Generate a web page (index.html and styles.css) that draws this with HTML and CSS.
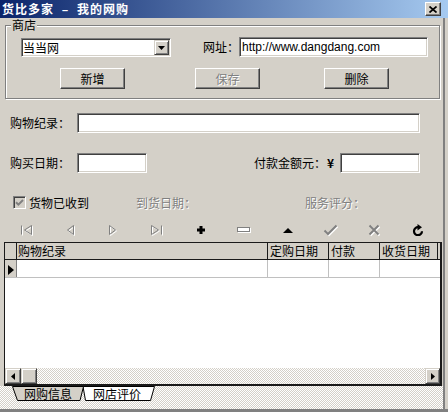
FILE: index.html
```html
<!DOCTYPE html>
<html lang="zh-CN">
<head>
<meta charset="utf-8">
<title>货比多家 – 我的网购</title>
<link rel="stylesheet" href="styles.css">
</head>
<body>
<div class="window">
  <div class="titlebar">
    <span class="title">货比多家 <span class="dash">–</span> 我的网购</span>
    <span class="close"><svg width="8" height="7" viewBox="0 0 8 7"><path d="M0.5 0.5 L7.5 6.5 M7.5 0.5 L0.5 6.5" stroke="#000" stroke-width="1.7"/></svg></span>
  </div>
  <div class="client">
    <div class="group">
      <span class="legend">商店</span>
      <div class="row1">
        <div class="combo">
          <span class="combo-text">当当网</span>
          <span class="combo-btn"><svg width="7" height="4" viewBox="0 0 7 4"><polygon points="0,0 7,0 3.5,4" fill="#000"/></svg></span>
        </div>
        <span class="url-label">网址：</span>
        <div class="input url">http://www.dangdang.com</div>
      </div>
      <div class="row2">
        <span class="btn b-add">新增</span>
        <span class="btn b-save disabled">保存</span>
        <span class="btn b-del">删除</span>
      </div>
    </div>

    <div class="frow r-record">
      <span class="lbl">购物纪录：</span>
      <div class="input w-record"></div>
    </div>

    <div class="frow r-date">
      <span class="lbl">购买日期：</span>
      <div class="input w-date"></div>
      <span class="lbl-amt">付款金额元：<b class="yen">¥</b></span>
      <div class="input w-amt"></div>
    </div>

    <div class="frow r-check">
      <span class="chk"><svg width="9" height="9" viewBox="0 0 9 9"><path d="M1 4.2 L3.4 6.6 L8 2" fill="none" stroke="#808080" stroke-width="2"/></svg></span>
      <span class="chk-label">货物已收到</span>
      <span class="dis arr-date">到货日期：</span>
      <span class="dis rating">服务评分：</span>
    </div>

    <div class="nav">
      <span class="nb"><svg width="14" height="13" viewBox="0 0 14 13">
        <path class="hl" transform="translate(1 1)" d="M1.5 1.5v9M11.5 1.5L4.5 6L11.5 10.5Z"/>
        <path class="dk" d="M1.5 1.5v9M11.5 1.5L4.5 6L11.5 10.5Z"/></svg></span>
      <span class="nb"><svg width="11" height="13" viewBox="0 0 11 13">
        <path class="hl" transform="translate(1 1)" d="M8.5 1.5L2.5 6L8.5 10.5Z"/>
        <path class="dk" d="M8.5 1.5L2.5 6L8.5 10.5Z"/></svg></span>
      <span class="nb"><svg width="11" height="13" viewBox="0 0 11 13">
        <path class="hl" transform="translate(1 1)" d="M1.5 1.5L7.5 6L1.5 10.5Z"/>
        <path class="dk" d="M1.5 1.5L7.5 6L1.5 10.5Z"/></svg></span>
      <span class="nb"><svg width="14" height="13" viewBox="0 0 14 13">
        <path class="hl" transform="translate(1 1)" d="M11.5 1.5v9M1.5 1.5L8.5 6L1.5 10.5Z"/>
        <path class="dk" d="M11.5 1.5v9M1.5 1.5L8.5 6L1.5 10.5Z"/></svg></span>
      <span class="nb"><svg width="8" height="8" viewBox="0 0 8 8"><path d="M2.5 0h3v2.5h2.5v3h-2.5v2.5h-3v-2.5h-2.5v-3h2.5z" fill="#000"/></svg></span>
      <span class="nb"><svg width="14" height="6" viewBox="0 0 14 6">
        <rect class="hl" x="1.5" y="1.5" width="12" height="4"/>
        <rect class="dk wf" x="0.5" y="0.5" width="12" height="4"/></svg></span>
      <span class="nb"><svg width="10" height="5" viewBox="0 0 10 5"><polygon points="0,5 5,0 10,5" fill="#000"/></svg></span>
      <span class="nb"><svg width="16" height="13" viewBox="0 0 16 13">
        <path class="hl th" transform="translate(1 1)" d="M1.5 6.5L5 10L13.5 1.5"/>
        <path class="dk th" d="M1.5 6.5L5 10L13.5 1.5"/></svg></span>
      <span class="nb"><svg width="13" height="13" viewBox="0 0 13 13">
        <path class="hl th" transform="translate(1 1)" d="M1.5 1.5L10.5 10.5M10.5 1.5L1.5 10.5"/>
        <path class="dk th" d="M1.5 1.5L10.5 10.5M10.5 1.5L1.5 10.5"/></svg></span>
      <span class="nb"><svg width="12" height="12" viewBox="0 0 12 12">
        <path d="M10 7.2 A4 4 0 1 1 6.2 3.2" fill="none" stroke="#000" stroke-width="2.2"/>
        <polygon points="5.5,0 10,3.2 5.5,6.4" fill="#000"/></svg></span>
    </div>

    <div class="grid">
      <div class="ghead">
        <div class="hc ci"></div>
        <div class="hc c1">购物纪录</div>
        <div class="hc c2">定购日期</div>
        <div class="hc c3">付款</div>
        <div class="hc c4">收货日期</div>
        <div class="hc cr"></div>
      </div>
      <div class="grow">
        <div class="dc ci"><svg width="6" height="10" viewBox="0 0 6 10"><polygon points="0,0 6,5 0,10" fill="#000"/></svg></div>
        <div class="dc c1"></div>
        <div class="dc c2"></div>
        <div class="dc c3"></div>
        <div class="dc c4"></div>
      </div>
      <div class="gbody"></div>
      <div class="hscroll">
        <span class="sbtn"><svg width="4" height="7" viewBox="0 0 4 7"><polygon points="4,0 0,3.5 4,7" fill="#000"/></svg></span>
        <span class="sbtn thumb"></span>
        <span class="track"></span>
        <span class="sbtn last"><svg width="4" height="7" viewBox="0 0 4 7"><polygon points="0,0 4,3.5 0,7" fill="#000"/></svg></span>
      </div>
    </div>

    <div class="tabs">
      <svg class="tabshape" width="160" height="16" viewBox="0 0 160 16">
        <polygon points="83,0.5 154.5,0.5 150.5,14.5 85.5,14.5" fill="#fff" stroke="#000"/>
        <polygon points="12.5,0.5 83.5,0.5 80,14.5 17.5,14.5" fill="#d4d0c8" stroke="#000"/>
      </svg>
      <span class="tab t1">网购信息</span>
      <span class="tab t2">网店评价</span>
    </div>
  </div>
  <div class="bottomband"></div>
</div>
</body>
</html>
```

FILE: styles.css
```css
* { box-sizing: border-box; margin: 0; padding: 0; }
html, body { width: 448px; height: 412px; overflow: hidden; }
body {
  background: #d4d0c8;
  font: 12px/14px "Noto Sans CJK SC", "Noto Sans", sans-serif;
  color: #000;
}
.window { display: flex; flex-direction: column; width: 448px; height: 412px; }

/* title bar */
.titlebar {
  flex: none;
  height: 18px;
  display: flex;
  align-items: center;
  justify-content: space-between;
  padding: 0 7px 0 2px;
  background: linear-gradient(to right, #0a246a, #a6caf0);
}
.title { color: #fff; font-weight: bold; letter-spacing: 1px; line-height: 14px; white-space: pre; }
.dash { margin: 0 4px; }
.close {
  width: 16px; height: 14px;
  display: flex; align-items: center; justify-content: center;
  background: #d4d0c8;
  border: 1px solid; border-color: #fff #404040 #404040 #fff;
  box-shadow: inset -1px -1px #808080;
}

/* client */
.client {
  flex: none;
  width: 445px; height: 391px;
  border-right: 2px solid #808080;
  display: flex; flex-direction: column;
}
.bottomband { flex: none; height: 3px; background: #808080; }

/* common controls */
.input {
  background: #fff;
  border: 1px solid; border-color: #808080 #fff #fff #808080;
  box-shadow: inset 1px 1px #404040, inset -1px -1px #d4d0c8;
  height: 20px;
}
.btn {
  display: flex; align-items: center; justify-content: center;
  width: 65px; height: 21px;
  background: #d4d0c8;
  border: 1px solid; border-color: #fff #404040 #404040 #fff;
  box-shadow: inset -1px -1px #808080;
}
.disabled, .dis { color: #808080; text-shadow: 1px 1px 0 #fff; }

/* group box */
.group {
  position: relative;
  flex: none;
  margin: 7px 0 0 5px;
  width: 435px; height: 74px;
  border: 1px solid #808080;
  box-shadow: inset 1px 1px #fff, 1px 1px #fff;
  padding: 11px 0 0 15px;
}
.legend {
  position: absolute; left: 5px; top: -8px;
  padding: 0 1px; background: #d4d0c8; line-height: 14px;
}
.row1 { display: flex; align-items: flex-start; height: 20px; }
.combo {
  display: flex; align-items: center; justify-content: space-between;
  margin-top: 1px;
  width: 150px; height: 19px;
  background: #fff;
  border: 1px solid; border-color: #808080 #fff #fff #808080;
  box-shadow: inset 1px 1px #404040, inset -1px -1px #d4d0c8;
  padding: 1px;
}
.combo-text { line-height: 15px; }
.combo-btn {
  display: flex; align-items: center; justify-content: center;
  width: 15px; height: 15px;
  background: #d4d0c8;
  border: 1px solid; border-color: #d4d0c8 #404040 #404040 #d4d0c8;
  box-shadow: inset 1px 1px #fff, inset -1px -1px #808080;
}
.url-label { margin-left: 32px; width: 36px; line-height: 20px; }
.url {
  width: 189px;
  font: 12px/18px "Liberation Sans", Arial, sans-serif;
  padding-left: 2px;
}
.row2 { display: flex; margin-top: 11px; }
.b-add { margin-left: 39px; }
.b-save { margin-left: 70px; }
.b-del { margin-left: 64px; }

/* form rows */
.frow { flex: none; display: flex; align-items: center; padding-left: 10px; }
.lbl { width: 67px; line-height: 20px; }
.r-record { margin-top: 14px; height: 20px; }
.w-record { width: 343px; }
.r-date { margin-top: 20px; height: 20px; padding-right: 23px; }
.w-date { width: 70px; }
.lbl-amt { margin-left: auto; }
.yen { font-weight: bold; margin-left: 1px; }
.w-amt { width: 80px; margin-left: 6px; }
.r-check { margin-top: 22px; height: 15px; padding-left: 13px; }
.chk {
  display: flex; align-items: center; justify-content: center;
  width: 13px; height: 13px;
  background: #d4d0c8;
  border: 1px solid; border-color: #808080 #fff #fff #808080;
  box-shadow: inset 1px 1px #404040, inset -1px -1px #d4d0c8;
}
.chk-label { margin-left: 3px; }
.arr-date { margin-left: 47px; }
.rating { margin-left: 109px; }

/* navigator */
.nav { flex: none; display: flex; margin-top: 9px; height: 22px; padding: 0 3px 0 5px; }
.nb { flex: 1; display: flex; align-items: center; justify-content: center; }
.nb svg { display: block; }
.hl { fill: none; stroke: #fff; stroke-width: 1; }
.dk { fill: none; stroke: #808080; stroke-width: 1; }
.dk.wf { fill: #fff; }
.th { stroke-width: 2; }

/* grid */
.grid {
  flex: none;
  margin: 1px 0 0 4px;
  width: 438px; height: 144px;
  border: 1px solid #1a1a1a;
  border-right-width: 2px; border-bottom-width: 2px;
  background: #fff;
  display: flex; flex-direction: column;
}
.ghead { flex: none; display: flex; height: 17px; background: #d4d0c8; border-bottom: 1px solid #1a1a1a; }
.hc { border-right: 1px solid #1a1a1a; line-height: 16px; padding-left: 1px; white-space: nowrap; }
.hc.c2, .hc.c3, .hc.c4 { padding-left: 2px; }
.ci { width: 12px; }
.c1 { width: 251px; }
.c2 { width: 61px; }
.c3 { width: 51px; }
.c4 { width: 58px; }
.hc.cr { flex: 1; border-right: 0; }
.grow { flex: none; display: flex; height: 18px; border-bottom: 1px solid #c0c0c0; }
.dc { border-right: 1px solid #c0c0c0; }
.dc.ci {
  background: #d4d0c8; border-right-color: #808080;
  display: flex; align-items: center; justify-content: center; padding-top: 2px;
}
.dc.c4 { border-right: 0; }
.gbody { flex: 1; }
.hscroll { flex: none; display: flex; height: 16px; }
.sbtn {
  display: flex; align-items: center; justify-content: center;
  width: 16px; height: 16px;
  background: #d4d0c8;
  border: 1px solid; border-color: #d4d0c8 #404040 #404040 #d4d0c8;
  box-shadow: inset 1px 1px #fff, inset -1px -1px #808080;
}
.sbtn.last { width: 15px; }
.track, .tabs {
  background: repeating-conic-gradient(#d4d0c8 0% 25%, #ffffff 0% 50%) 0 0 / 2px 2px;
}
.track { flex: 1; }

/* sheet tabs */
.tabs { position: relative; flex: none; height: 23px; display: flex; align-items: flex-start; padding-left: 24px; }
.tabshape { position: absolute; left: 0; top: 0; display: block; }
.tab { position: relative; height: 15px; line-height: 15px; white-space: nowrap; }
.t2 { margin-left: 21px; }
```
